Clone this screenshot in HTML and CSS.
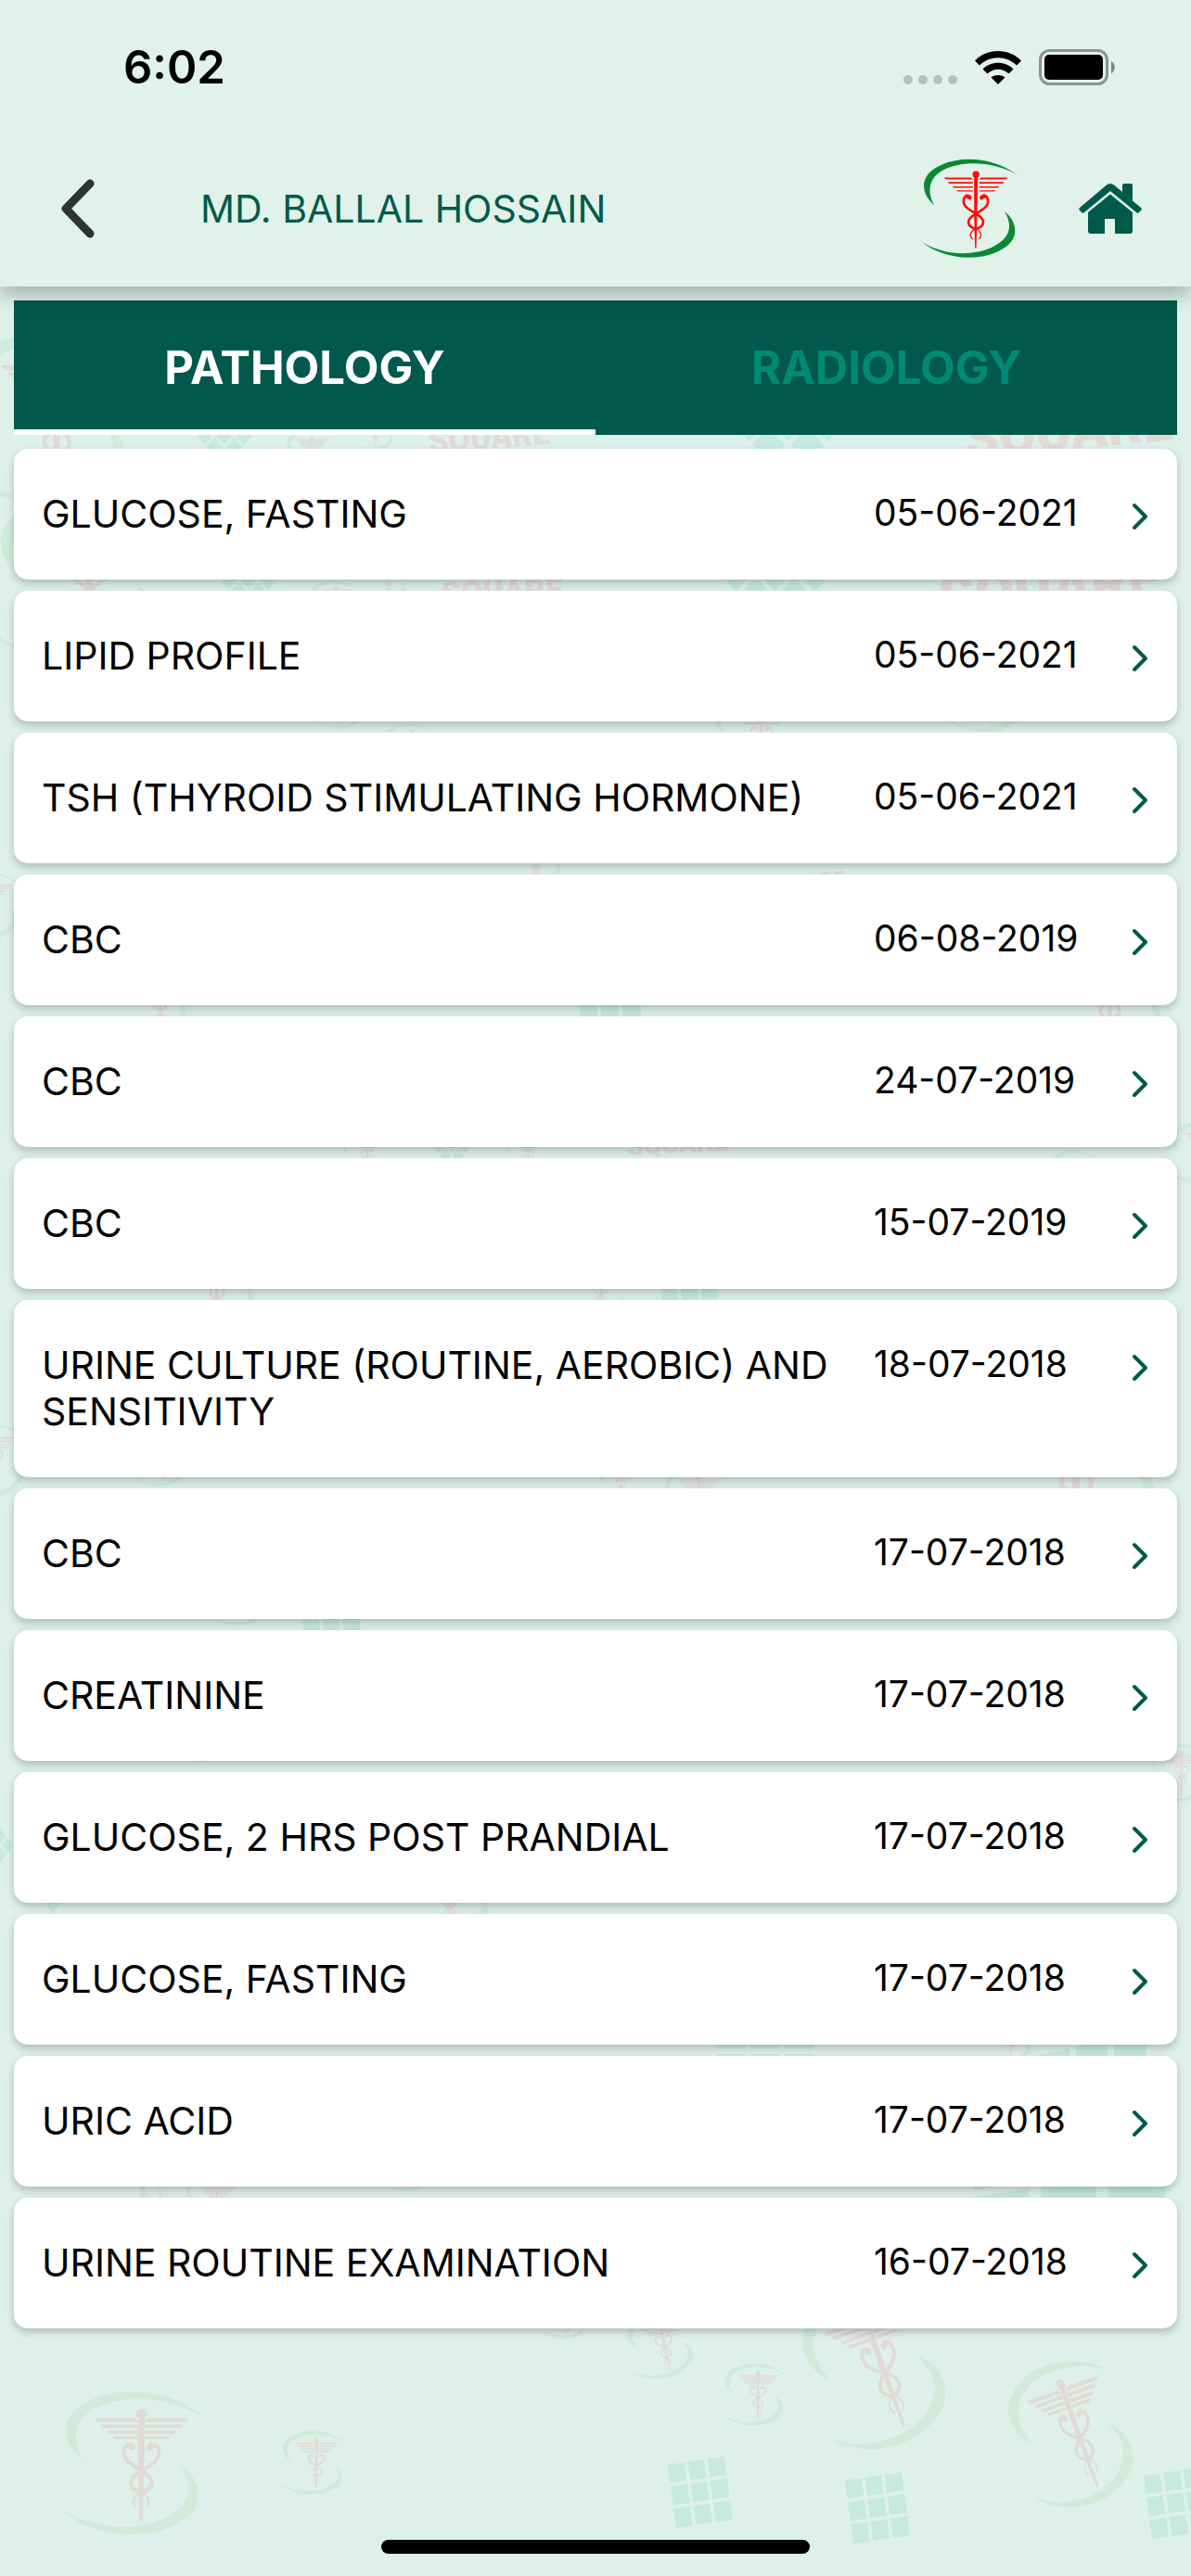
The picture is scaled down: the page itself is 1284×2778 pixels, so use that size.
FILE: index.html
```html
<!DOCTYPE html>
<html lang="en">
<head>
    <meta charset="UTF-8">
    <meta name="viewport" content="width=device-width, initial-scale=1">
    <title>Reports</title>
    <link rel="stylesheet" href="styles.css">
</head>
<body>
    <!-- shared shapes -->
    <svg class="defs" aria-hidden="true">
        <symbol id="emblem" viewBox="0 0 308 322">
            <g class="emblem-ring">
                <path d="M39 150C-8 106-2 60 40 32C110-14 225-8 308 52C235 10 130 2 66 38C18 66 18 110 39 150Z"/>
                <path d="M266 170C310 206 312 256 268 286C200 334 75 330 0 269C75 316 180 314 236 280C290 250 290 210 266 170Z"/>
            </g>
            <ellipse class="emblem-eye" cx="173" cy="202" rx="22" ry="22"/>
            <g class="emblem-staff">
                <circle cx="174" cy="51" r="11"/>
                <path d="M168 56H180L178 180L175 288H171L168 180Z"/>
                <path d="M71 61H158L164 67H77ZM83 75H164V80H87ZM98 89H164V94H102ZM111 102H164V106H114Z"/>
                <path d="M277 61H190L184 67H271ZM265 75H184V80H261ZM250 89H184V94H246ZM237 102H184V106H234Z"/>
            </g>
            <g class="emblem-snake">
                <path d="M156 124C150 114 134 118 134 136C134 158 158 166 174 178C206 194 204 218 174 226"/>
                <path d="M190 124C196 114 213 118 213 136C213 158 190 166 174 178C142 194 142 218 174 226"/>
                <path class="thin" d="M174 226C154 234 153 250 162 258M174 226C192 234 193 250 185 258"/>
                <path class="head" d="M144 121L154 126M202 121L192 126"/>
            </g>
        </symbol>
        <symbol id="chevron" viewBox="0 0 18 30">
            <path d="M3 3L15 15L3 27" fill="none" stroke="currentColor" stroke-width="4" stroke-linecap="round" stroke-linejoin="round"/>
        </symbol>
    </svg>

    <!-- faded backdrop -->
    <svg class="backdrop" viewBox="0 0 1284 2778" preserveAspectRatio="xMidYMid slice" aria-hidden="true">
        <defs>
            <path id="tiles" d="M0 0h.29v.29h-.29zM.35 0h.29v.29h-.29zM.7 0h.3v.29h-.3zM0 .35h.29v.29h-.29zM.35 .35h.29v.29h-.29zM.7 .35h.3v.29h-.3zM0 .7h.29v.3h-.29zM.35 .7h.29v.3h-.29zM.7 .7h.3v.3h-.3z"/>
        </defs>

        <use href="#emblem" x="-38" y="360" width="176" height="184"/>
        <use href="#emblem" x="-2" y="535" width="174" height="182"/>
        <use href="#emblem" x="308" y="464" width="50" height="52"/>
        <use href="#emblem" x="380" y="440" width="44" height="46"/>
        <use href="#emblem" x="334" y="626" width="50" height="52"/>
        <use href="#emblem" x="394" y="600" width="44" height="46"/>
        <use href="#emblem" x="340" y="730" width="54" height="56"/>
        <use href="#emblem" x="412" y="780" width="58" height="60"/>
        <use href="#emblem" x="770" y="750" width="90" height="94"/>
        <use href="#emblem" x="1020" y="700" width="86" height="90"/>
        <use href="#emblem" x="542" y="890" width="64" height="66"/>
        <use href="#emblem" x="-50" y="940" width="70" height="74"/>
        <use href="#emblem" x="136" y="1040" width="66" height="70"/>
        <use href="#emblem" x="1120" y="1000" width="136" height="142"/>
        <use href="#emblem" x="368" y="1220" width="50" height="54"/>
        <use href="#emblem" x="546" y="1225" width="42" height="44"/>
        <use href="#emblem" x="1130" y="1241" width="54" height="56"/>
        <use href="#emblem" x="1262" y="1210" width="64" height="66"/>
        <use href="#emblem" x="180" y="1330" width="96" height="100"/>
        <use href="#emblem" x="612" y="1360" width="64" height="68"/>
        <use href="#emblem" x="-50" y="1535" width="76" height="80"/>
        <use href="#emblem" x="148" y="1550" width="50" height="54"/>
        <use href="#emblem" x="646" y="1580" width="42" height="44"/>
        <use href="#emblem" x="716" y="1582" width="66" height="70"/>
        <use href="#emblem" x="1042" y="1460" width="210" height="218"/>
        <use href="#emblem" x="226" y="1690" width="60" height="64"/>
        <use href="#emblem" x="190" y="1840" width="50" height="70"/>
        <use href="#emblem" x="1240" y="1880" width="60" height="64"/>
        <use href="#emblem" x="430" y="1984" width="98" height="104"/>
        <use href="#emblem" x="1062" y="2170" width="50" height="54"/>
        <use href="#emblem" x="126" y="2330" width="50" height="54"/>
        <use href="#emblem" x="200" y="2345" width="60" height="64"/>
        <use href="#emblem" x="412" y="2310" width="50" height="54"/>
        <use href="#emblem" x="588" y="2480" width="44" height="42"/>

        <use href="#emblem" x="69" y="2577" width="148" height="159" preserveAspectRatio="none"/>
        <use href="#emblem" x="304" y="2620" width="66" height="72" preserveAspectRatio="none"/>
        <use href="#emblem" x="781" y="2547" width="64" height="71" preserveAspectRatio="none"/>
        <use href="#emblem" x="678" y="2492" width="68" height="74" transform="rotate(-12 712 2529)"/>
        <!-- the two tilted ones are slanted as well as turned -->
        <g transform="translate(943 2554) rotate(-20) scale(.44 .54)"><use href="#emblem" x="-154" y="-161" width="308" height="322"/></g>
        <g transform="translate(1155 2625) rotate(-20) scale(.38 .49)"><use href="#emblem" x="-154" y="-161" width="308" height="322"/></g>

        <g class="tile-set">
            <use href="#tiles" transform="matrix(61 -9 9 68 720 2658)"/>
            <use href="#tiles" transform="matrix(61 -9 9 68 911 2675)"/>
            <use href="#tiles" transform="matrix(61 -9 9 68 1233 2670)"/>
            <use href="#tiles" transform="matrix(30 34 30 -34 212 470)"/>
            <use href="#tiles" transform="matrix(30 34 30 -34 238 626)"/>
            <use href="#tiles" transform="matrix(60 68 60 -68 790 456)"/>
            <use href="#tiles" transform="matrix(60 68 60 -68 776 618)"/>
            <use href="#tiles" transform="matrix(66 0 2 60 624 1060)"/>
            <use href="#tiles" transform="matrix(20 28 20 -28 467 1236)"/>
            <use href="#tiles" transform="matrix(61 -2 2 60 713 1385)"/>
            <use href="#tiles" transform="matrix(61 -2 6 60 322 1705)"/>
            <use href="#tiles" transform="matrix(20 28 20 -28 -26 1990)"/>
            <use href="#tiles" transform="matrix(10 14 10 -14 47 2050)"/>
            <use href="#tiles" transform="matrix(105 0 2 100 772 2180)"/>
            <use href="#tiles" transform="matrix(115 -24 4 110 1120 2216)"/>
            <use href="#tiles" transform="matrix(206 -30 4 120 1047 2285)"/>
        </g>

        <g class="wordmark">
            <text x="463" y="488" font-size="34" transform="rotate(-4 463 488)">SQUARE</text>
            <text x="476" y="652" font-size="34" transform="rotate(-2 476 652)">SQUARE</text>
            <text x="1042" y="494" font-size="58" transform="rotate(-5 1042 494)">SQUARE</text>
            <text x="1014" y="666" font-size="62" transform="rotate(-5 1014 666)">SQUARE</text>
            <text x="820" y="964" font-size="24" transform="rotate(-5 820 964)">SQUARE</text>
            <text x="677" y="1246" font-size="28" transform="rotate(-3 677 1246)">SQUARE</text>
        </g>
        <g class="wordmark pale">
            <text x="530" y="2564" font-size="27" transform="rotate(8 530 2564)">SQUARE</text>
            <text x="528" y="2588" font-size="25" transform="rotate(8 528 2588)">HOSPITALS LTD</text>
        </g>
    </svg>

    <div class="screen">
        <header class="header">
            <div class="status">
                <span class="time">6:02</span>
                <div class="status-icons">
                    <svg class="dots" viewBox="0 0 58 10" aria-hidden="true">
                        <circle cx="5" cy="5" r="5"/><circle cx="21" cy="5" r="5"/><circle cx="37" cy="5" r="5"/><circle cx="53" cy="5" r="5"/>
                    </svg>
                    <svg class="wifi" viewBox="0 0 52 38" aria-hidden="true">
                        <path d="M26 37L18.5 29.500C22 26 30 26 33.500 29.500Z"/>
                        <path d="M9.500 20.500C18 11.500 34 11.500 42.500 20.500L37.500 25.500C31 19 21 19 14.500 25.500Z"/>
                        <path d="M1 11.500C14-2.500 38-2.500 51 11.500L46 16.500C35 5.500 17 5.500 6 16.500Z"/>
                    </svg>
                    <svg class="battery" viewBox="0 0 82 39" aria-hidden="true">
                        <rect x="1.500" y="1.500" width="72" height="36" rx="10" fill="none" stroke="#8a9590" stroke-width="3"/>
                        <rect x="6" y="6" width="63" height="27" rx="5"/>
                        <path d="M78 13C83 15 83 24 78 26Z" fill="#7f8a85"/>
                    </svg>
                </div>
            </div>
            <nav class="nav">
                <button class="back" type="button" aria-label="Back">
                    <svg viewBox="0 0 36 64" aria-hidden="true">
                        <path d="M31 5L5 32L31 59" fill="none" stroke="currentColor" stroke-width="9" stroke-linecap="round" stroke-linejoin="round"/>
                    </svg>
                </button>
                <h1 class="patient">MD. BALLAL HOSSAIN</h1>
                <svg class="logo" viewBox="0 0 308 322" role="img" aria-label="Hospital logo"><use href="#emblem"/></svg>
                <a class="home" href="#" aria-label="Home">
                    <svg viewBox="0 0 68 54" aria-hidden="true">
                        <path d="M34 0Q36 0 38 1.500L47 9V1.500Q47 0 48.500 0H56.500Q58 0 58 1.500V18.500L67 26Q68.500 27.500 67 29L65 31Q63.500 32.500 62 31L34 8L6 31Q4.500 32.500 3 31L1 29Q-.5 27.500 1 26L30 1.500Q32 0 34 0Z"/>
                        <path d="M34 11.500L58 31V51Q58 54 55 54H39V38H28V54H13Q10 54 10 51V31Z"/>
                    </svg>
                </a>
            </nav>
        </header>

        <main class="content">
            <div class="tabs" role="tablist">
                <button class="tab active" type="button" role="tab" aria-selected="true">PATHOLOGY</button>
                <button class="tab" type="button" role="tab" aria-selected="false">RADIOLOGY</button>
            </div>

            <ul class="reports">
                <li><a class="report" href="#"><span>GLUCOSE, FASTING</span><time>05-06-2021</time><svg class="chevron" aria-hidden="true"><use href="#chevron"/></svg></a></li>
                <li><a class="report" href="#"><span>LIPID PROFILE</span><time>05-06-2021</time><svg class="chevron" aria-hidden="true"><use href="#chevron"/></svg></a></li>
                <li><a class="report" href="#"><span>TSH (THYROID STIMULATING HORMONE)</span><time>05-06-2021</time><svg class="chevron" aria-hidden="true"><use href="#chevron"/></svg></a></li>
                <li><a class="report" href="#"><span>CBC</span><time>06-08-2019</time><svg class="chevron" aria-hidden="true"><use href="#chevron"/></svg></a></li>
                <li><a class="report" href="#"><span>CBC</span><time>24-07-2019</time><svg class="chevron" aria-hidden="true"><use href="#chevron"/></svg></a></li>
                <li><a class="report" href="#"><span>CBC</span><time>15-07-2019</time><svg class="chevron" aria-hidden="true"><use href="#chevron"/></svg></a></li>
                <li><a class="report" href="#"><span>URINE CULTURE (ROUTINE, AEROBIC) AND SENSITIVITY</span><time>18-07-2018</time><svg class="chevron" aria-hidden="true"><use href="#chevron"/></svg></a></li>
                <li><a class="report" href="#"><span>CBC</span><time>17-07-2018</time><svg class="chevron" aria-hidden="true"><use href="#chevron"/></svg></a></li>
                <li><a class="report" href="#"><span>CREATININE</span><time>17-07-2018</time><svg class="chevron" aria-hidden="true"><use href="#chevron"/></svg></a></li>
                <li><a class="report" href="#"><span>GLUCOSE, 2 HRS POST PRANDIAL</span><time>17-07-2018</time><svg class="chevron" aria-hidden="true"><use href="#chevron"/></svg></a></li>
                <li><a class="report" href="#"><span>GLUCOSE, FASTING</span><time>17-07-2018</time><svg class="chevron" aria-hidden="true"><use href="#chevron"/></svg></a></li>
                <li><a class="report" href="#"><span>URIC ACID</span><time>17-07-2018</time><svg class="chevron" aria-hidden="true"><use href="#chevron"/></svg></a></li>
                <li><a class="report" href="#"><span>URINE ROUTINE EXAMINATION</span><time>16-07-2018</time><svg class="chevron" aria-hidden="true"><use href="#chevron"/></svg></a></li>
            </ul>
        </main>

        <footer class="footer"><div class="home-bar"></div></footer>
    </div>
</body>
</html>
```
FILE: styles.css
```css
* {
    box-sizing: border-box;
}
body {
    --ring: #d0ebda;
    --staff: #e1dad7;
    --eye: none;
    --weight: 3;
    position: relative;
    margin: 0;
    background: #ddf0ea;
    color: #000;
    font-family: Inter, Roboto, sans-serif;
    font-size: 41px;
    line-height: 50px;
}
button {
    border: 0;
    padding: 0;
    background: none;
    font: inherit;
    color: inherit;
}
svg {
    display: block;
}
.defs {
    position: absolute;
    width: 0;
    height: 0;
}
.backdrop {
    position: absolute;
    inset: 0;
    width: 100%;
    height: 100%;
}
.emblem-ring {
    fill: var(--ring);
    stroke: var(--ring);
    stroke-width: var(--weight);
}
.emblem-staff {
    fill: var(--staff);
    stroke: var(--staff);
    stroke-width: var(--weight);
}
.emblem-eye {
    fill: var(--eye);
}
.emblem-snake {
    fill: none;
    stroke: var(--staff);
    stroke-width: 8;
    stroke-linecap: round;
}
.emblem-snake .thin {
    stroke-width: 4;
}
.emblem-snake .head {
    stroke-width: 12;
}
.tile-set {
    fill: #c6eadc;
}
.wordmark {
    fill: #e1dad7;
    font-family: Roboto, sans-serif;
    font-weight: 900;
}
.wordmark.pale {
    fill: #dff0e8;
    font-weight: 700;
}

.screen {
    position: relative;
    display: flex;
    flex-direction: column;
    min-height: 100vh;
}

/* header */
.header {
    position: relative;
    z-index: 1;
    background: #e0f2e9;
    box-shadow: 0 6px 24px rgba(0, 0, 0, 0.32);
}
.status {
    display: flex;
    align-items: center;
    justify-content: space-between;
    height: 145px;
    padding: 0 82px 0 133px;
}
.time {
    font-size: 49px;
    font-weight: 600;
}
.status-icons {
    display: flex;
    align-items: center;
    gap: 18px;
}
.dots {
    width: 58px;
    height: 10px;
    margin-top: 26px;
    fill: #b4c2bb;
}
.wifi {
    width: 52px;
    height: 38px;
}
.battery {
    width: 82px;
    height: 39px;
}
.nav {
    display: flex;
    align-items: center;
    height: 164px;
    padding: 0 53px 4px 66px;
}
.back {
    width: 150px;
    color: #2e3336;
}
.back svg {
    width: 36px;
    height: 64px;
}
.patient {
    flex: 1;
    margin: 0;
    font-size: 41px;
    font-weight: 400;
    color: #005a4c;
}
.logo {
    --ring: #0b8a34;
    --staff: #fb0d0d;
    --eye: #fff;
    --weight: 0;
    width: 103px;
    height: 108px;
    margin-right: 66px;
}
.home svg {
    width: 68px;
    height: 54px;
    fill: #005a4c;
}

/* tabs */
.content {
    padding: 15px;
}
.tabs {
    display: grid;
    grid-template-columns: 1fr 1fr;
    margin-bottom: 15px;
    background: #00594c;
}
.tab {
    height: 145px;
    border-bottom: 6px solid transparent;
    padding-top: 6px;
    font-size: 49px;
    font-weight: 700;
    color: #008a75;
}
.tab.active {
    border-color: #fff;
    color: #fff;
}

/* report list */
.reports {
    display: flex;
    flex-direction: column;
    gap: 12px;
    margin: 0;
    padding: 0;
    list-style: none;
}
.report {
    display: grid;
    grid-template-columns: 1fr 262px 18px;
    column-gap: 16px;
    align-items: start;
    padding: 45px 31px 46px 30px;
    border-radius: 15px;
    background: #fff;
    box-shadow: 0 4px 9px rgba(0, 0, 0, 0.22);
    color: inherit;
    text-decoration: none;
}
.report time {
    font-size: 39px;
    line-height: 48px;
}
.chevron {
    width: 18px;
    height: 30px;
    margin-top: 13px;
    color: #00594c;
}

/* home indicator */
.footer {
    margin-top: auto;
    padding-bottom: 24px;
}
.home-bar {
    width: 36%;
    height: 15px;
    margin: 0 auto;
    border-radius: 8px;
    background: #000;
}
```
